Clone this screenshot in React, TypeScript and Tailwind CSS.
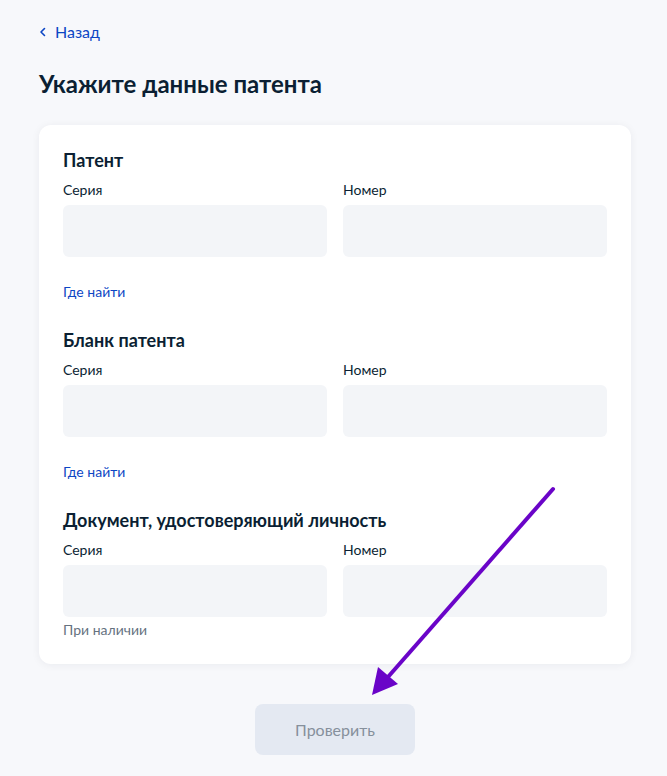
import React from 'react';

const font = { fontFamily: 'Lato, "Noto Sans", sans-serif' };

function Field({ label }: { label: string }) {
  return (
    <div className="flex-1">
      <div className="text-[14px] leading-[20px] text-[#0b1f33]">{label}</div>
      <div className="mt-[5px] h-[52px] rounded-[6px] bg-[#f3f5f8]" />
    </div>
  );
}

function Section({ title, note, link }: { title: string; note?: string; link?: string }) {
  return (
    <div>
      <h2 className="text-[18px] leading-[24px] font-bold text-[#0b1f33]">{title}</h2>
      <div className="mt-2 flex gap-4">
        <Field label="Серия" />
        <Field label="Номер" />
      </div>
      {link && <div className="mt-[25px] text-[14px] leading-[20px] text-[#0c46c4]">{link}</div>}
      {note && <div className="mt-[3px] text-[14px] leading-[20px] text-[#66727f]">{note}</div>}
    </div>
  );
}

export default function App() {
  return (
    <div className="relative min-h-screen w-full bg-[#f7f8fb]" style={font}>
      <div className="ml-[39px] w-[592px] pt-[22px] pb-5">
        <button className="flex items-center gap-2 text-[16px] leading-[20px] text-[#0c46c4]">
          <svg width="8" height="10" viewBox="0 0 8 10" fill="none">
            <path d="M5.5 1.5 L2 5 L5.5 8.5" stroke="#0c46c4" strokeWidth="1.6" strokeLinecap="round" strokeLinejoin="round" />
          </svg>
          Назад
        </button>
        <h1 className="mt-[26px] text-[24px] leading-[32px] font-bold text-[#0b1f33]">Укажите данные патента</h1>

        <div className="mt-[25px] rounded-[12px] bg-white px-6 pt-[23px] pb-6 shadow-[0_1px_8px_rgba(11,31,51,0.06)]">
          <div className="flex flex-col gap-[26px]">
            <Section title="Патент" link="Где найти" />
            <Section title="Бланк патента" link="Где найти" />
            <Section title="Документ, удостоверяющий личность" note="При наличии" />
          </div>
        </div>

        <div className="mt-10 flex justify-center">
          <button className="h-[51px] w-[160px] rounded-[8px] bg-[#e4e9f2] text-[16px] text-[#86909c]">Проверить</button>
        </div>
      </div>

      {/* pointer arrow */}
      <svg className="pointer-events-none absolute left-0 top-0" width="667" height="776" viewBox="0 0 667 776">
        <line x1="553" y1="489" x2="388" y2="677" stroke="#6a04c8" strokeWidth="4" strokeLinecap="round" />
        <polygon points="372,695 378,667 398,684" fill="#6a04c8" />
      </svg>
    </div>
  );
}
